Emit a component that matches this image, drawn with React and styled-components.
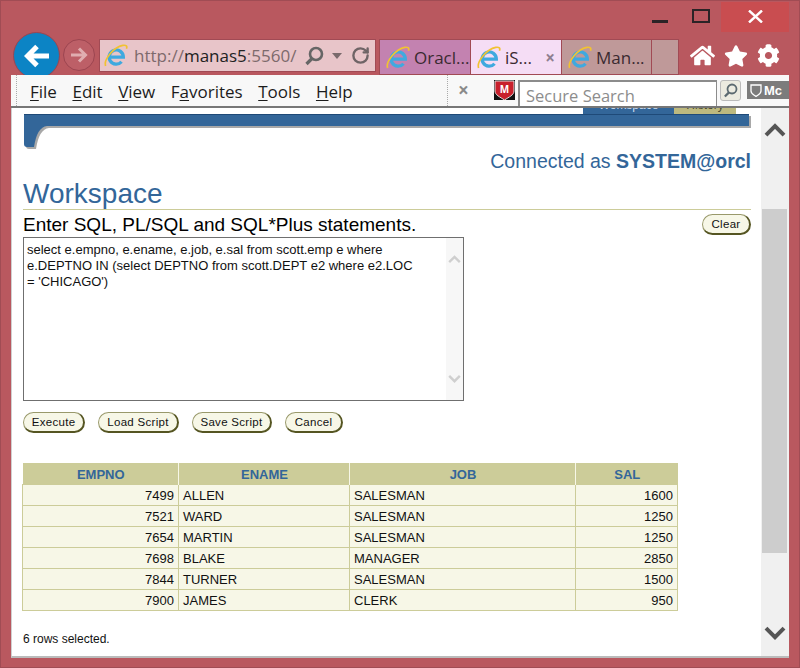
import styled, { createGlobalStyle } from "styled-components";
import { FaHome, FaStar, FaCog } from "react-icons/fa";
import { RotateCw } from "lucide-react";

const GlobalStyle = createGlobalStyle`
  html, body {
    margin: 0;
    padding: 0;
    background: #b9575f;
  }
`;

const Frame = styled.div`
  width: 800px;
  height: 668px;
  box-sizing: border-box;
  background: #b9585f;
  border: 1px solid #a04c54;
  overflow: hidden;
  display: flex;
  flex-direction: column;
  font-family: "Liberation Sans", Arial, sans-serif;
`;

const TitleBar = styled.div`
  height: 31px;
  display: flex;
  justify-content: flex-end;
  align-items: flex-start;
  padding-right: 10px;
`;

const WinButton = styled.div`
  width: ${(p) => p.$w}px;
  height: 30px;
  box-sizing: border-box;
  padding-bottom: 2px;
  display: flex;
  align-items: center;
  justify-content: center;
  background: ${(p) => (p.$close ? "#c94d50" : "transparent")};
  margin-top: 1px;
`;

const NavRow = styled.div`
  height: 43px;
  display: flex;
  align-items: flex-start;
  position: relative;
  padding-left: 98px;
`;

const BackButton = styled.div`
  position: absolute;
  left: 12px;
  top: 0;
  width: 45px;
  height: 45px;
  border-radius: 50%;
  background: #0c84c5;
  border: 1px solid #9c4550;
  display: flex;
  align-items: center;
  justify-content: center;
`;

const ForwardButton = styled.div`
  position: absolute;
  left: 62px;
  top: 7px;
  width: 30px;
  height: 30px;
  border-radius: 50%;
  background: #bd5f67;
  border: 1px solid #9c4550;
  display: flex;
  align-items: center;
  justify-content: center;
`;

const AddressBar = styled.div`
  width: 277px;
  height: 33px;
  margin-top: 7px;
  box-sizing: border-box;
  background: #e8c5c9;
  border: 1px solid #a14a54;
  display: flex;
  align-items: center;
  padding-left: 3px;
  font-family: "Open Sans", sans-serif;
  font-size: 17px;
  color: #7d6a6c;
  white-space: nowrap;
`;

const UrlText = styled.span`
  margin-left: 6px;
  width: 164px;
  overflow: hidden;
  flex: none;
  b {
    font-weight: 400;
    color: #222;
  }
`;

const Tabs = styled.div`
  display: flex;
  margin-top: 7px;
  margin-left: 3px;
`;

const Tab = styled.div`
  width: ${(p) => p.$w}px;
  height: 36px;
  box-sizing: border-box;
  background: ${(p) => p.$bg};
  border: 1px solid #a14a54;
  border-left-width: ${(p) => (p.$joined ? 0 : 1)}px;
  display: flex;
  align-items: center;
  gap: 4px;
  padding-left: 5px;
  font-family: "Open Sans", sans-serif;
  font-size: 17px;
  color: #3a2a30;
  white-space: nowrap;
  overflow: hidden;
`;

const TabClose = styled.span`
  margin-left: auto;
  margin-right: 6px;
  color: #8f7f90;
  font-size: 17px;
  font-weight: 700;
`;

const ToolIcons = styled.div`
  display: flex;
  align-items: center;
  gap: 9px;
  margin-left: 11px;
  margin-top: 11px;
  color: #fff;
`;

const MenuBar = styled.div`
  height: 33px;
  margin: 0 10px;
  box-sizing: border-box;
  background: #f8f8f8;
  border-bottom: 2px solid #777;
  display: flex;
  overflow: hidden;
  position: relative;
  z-index: 1;
  font-family: "Open Sans", sans-serif;
  font-size: 17px;
  color: #1c1c1c;
`;

const MenuList = styled.div`
  width: 432px;
  flex: none;
  margin-left: 5px;
  box-sizing: border-box;
  border-left: 1px dotted #aaa;
  border-right: 1px dotted #aaa;
  display: flex;
  gap: 15.5px;
  align-items: center;
  padding: 2px 0 0 13px;
`;

const MenuItem = styled.span`
  u {
    text-underline-offset: 2px;
  }
`;

const StopX = styled.span`
  margin-left: 10px;
  margin-top: 2px;
  width: 29px;
  flex: none;
  color: #8a8a8a;
  font-size: 19px;
  font-weight: 700;
`;

const Shield = styled.svg`
  margin: 5px 0 0 7px;
  flex: none;
`;

const SearchInput = styled.div`
  width: 199px;
  height: 40px;
  margin: 5px 0 0 3px;
  box-sizing: border-box;
  background: #fff;
  border: 2px solid #8c8c8c;
  border-right-width: 1px;
  padding: 2px 0 0 6px;
  color: #8d8d8d;
  font-size: 16.5px;
  flex: none;
`;

const SearchButton = styled.div`
  width: 21px;
  height: 21px;
  margin: 5px 0 0 3px;
  box-sizing: border-box;
  background: #ecebe0;
  border: 1px solid #bbb;
  border-radius: 3px;
  display: flex;
  align-items: center;
  justify-content: center;
  flex: none;
`;

const BrandButton = styled.div`
  width: 44px;
  height: 18px;
  margin: 6px 0 0 6px;
  background: #7c7c7c;
  color: #fff;
  font-size: 13px;
  font-weight: 700;
  display: flex;
  align-items: center;
  gap: 2px;
  padding-left: 3px;
  flex: none;
  overflow: hidden;
  white-space: nowrap;
  font-family: "Liberation Sans", Arial, sans-serif;
`;

const Page = styled.div`
  height: 548px;
  margin: 0 10px;
  background: #fff;
  border-left: 1px solid #d0d0d0;
  border-bottom: 2px solid #bbb;
  display: flex;
  overflow: hidden;
`;

const Main = styled.div`
  width: 749px;
  box-sizing: border-box;
  padding: 0 10px 0 11px;
`;

const TopTabs = styled.div`
  height: 6px;
  display: flex;
  justify-content: flex-end;
  padding-right: 15px;
  overflow: hidden;
`;

const TopTab = styled.div`
  width: ${(p) => p.$w}px;
  height: 6px;
  background: ${(p) => p.$bg};
  color: ${(p) => p.$color};
  font-size: 12px;
  line-height: 12px;
  text-align: center;
  overflow: hidden;
  span {
    display: block;
    margin-top: -9px;
  }
`;

const Banner = styled.svg`
  display: block;
  height: 36px;
  width: 728px;
`;

const Connected = styled.div`
  text-align: right;
  color: #336699;
  font-size: 19.5px;
  line-height: 22px;
  b {
    font-weight: 700;
  }
`;

const Heading = styled.h1`
  margin: 7px 0 0;
  font-size: 28px;
  line-height: 30px;
  font-weight: 400;
  color: #336699;
  border-bottom: 1px solid #cccc99;
`;

const SqlRow = styled.div`
  height: 27px;
  box-sizing: border-box;
  padding-top: 2px;
  display: flex;
  align-items: center;
  justify-content: space-between;
  font-size: 19px;
  color: #000;
`;

const PillButton = styled.div`
  display: inline-flex;
  align-items: center;
  justify-content: center;
  width: ${(p) => p.$w}px;
  height: 21px;
  box-sizing: border-box;
  background: #f7f7e7;
  border: 1px solid #99996b;
  border-right: 2px solid #555522;
  border-bottom: 2px solid #555522;
  border-radius: 11px;
  font-size: 11.5px;
  letter-spacing: 0.3px;
  color: #111;
`;

const SqlBox = styled.div`
  width: 441px;
  height: 164px;
  box-sizing: border-box;
  border: 1px solid #6f6f6f;
  display: flex;
  justify-content: space-between;
`;

const SqlText = styled.div`
  padding: 4px 0 0 3px;
  width: 388px;
  font-size: 13px;
  line-height: 16px;
  color: #111;
`;

const BoxScroll = styled.div`
  width: 17px;
  background: #f7f7f7;
  display: flex;
  flex-direction: column;
  justify-content: space-between;
  align-items: center;
  padding: 17px 0 17px;
`;

const ButtonRow = styled.div`
  display: flex;
  gap: 13px;
  margin-top: 11px;
`;

const ResultTable = styled.table`
  margin: 30px 0 0 -1px;
  width: 655px;
  border-collapse: collapse;
  table-layout: fixed;
  font-size: 13px;
`;

const Th = styled.th`
  height: 20px;
  padding: 1px 0 0 1px;
  background: #cccc99;
  color: #336699;
  font-weight: 700;
  text-align: center;
  border-left: 1px solid #f7f7e7;
  &:first-child {
    border-left: 0;
  }
`;

const Td = styled.td`
  height: 20px;
  padding: 0 4px;
  background: #f7f7e7;
  border: 1px solid #cccc99;
  color: #111;
  text-align: ${(p) => (p.$num ? "right" : "left")};
`;

const RowCount = styled.div`
  margin-top: 21px;
  font-size: 12px;
  line-height: 15px;
  color: #111;
`;

const ScrollBar = styled.div`
  width: 28px;
  background: #f0f0f0;
  display: flex;
  flex-direction: column;
  align-items: center;
`;

const ScrollEnd = styled.div`
  height: ${(p) => p.$h}px;
  display: flex;
  align-items: ${(p) => (p.$down ? "flex-end" : "flex-start")};
  padding: ${(p) => (p.$down ? "0 0 14px" : "15px 0 0")};
  box-sizing: border-box;
`;

const Thumb = styled.div`
  width: 25px;
  margin-right: 2px;
  height: 344px;
  background: #cdcdcd;
`;

const IeIcon = () => (
  <svg width="25" height="25" viewBox="0 0 24 24" fill="none" style={{ flex: "none" }}>
    <path
      d="M7 13.500H19.500A6.800 6.800 0 1 0 17.800 18"
      stroke="#3fa9df"
      strokeWidth="3.200"
    />
    <path
      d="M2.500 22C0.500 16 10 4 19 2.300C22.500 1.800 23.500 3 22.500 5.500"
      stroke="#f1c232"
      strokeWidth="1.600"
    />
  </svg>
);

const Chevron = ({ down, size = 22, color = "#555", width = 4 }) => (
  <svg width={size} height={size * 0.7} viewBox="0 0 22 15" fill="none">
    <path
      d={down ? "M2 3l9 9 9-9" : "M2 12l9-9 9 9"}
      stroke={color}
      strokeWidth={width}
    />
  </svg>
);

const Magnifier = ({ size = 20, color = "#666", width = 2.6 }) => (
  <svg width={size} height={size} viewBox="0 0 20 20" fill="none">
    <circle cx="12" cy="8" r="6" stroke={color} strokeWidth={width} />
    <path d="M8 12.500L2.500 18" stroke={color} strokeWidth={width + 0.6} />
  </svg>
);

const columns = ["EMPNO", "ENAME", "JOB", "SAL"];
const columnWidths = [156, 171, 226, 102];

const rows = [
  [7499, "ALLEN", "SALESMAN", 1600],
  [7521, "WARD", "SALESMAN", 1250],
  [7654, "MARTIN", "SALESMAN", 1250],
  [7698, "BLAKE", "MANAGER", 2850],
  [7844, "TURNER", "SALESMAN", 1500],
  [7900, "JAMES", "CLERK", 950],
];

const menus = [
  ["F", "ile"],
  ["E", "dit"],
  ["V", "iew"],
  ["F", "avorites", true],
  ["T", "ools"],
  ["H", "elp"],
];

export default function App() {
  return (
    <>
      <GlobalStyle />
      <Frame>
        <TitleBar>
          <WinButton $w={42}>
            <svg width="16" height="16" viewBox="0 0 16 16">
              <rect x="0" y="12" width="16" height="3" fill="#2b2326" />
            </svg>
          </WinButton>
          <WinButton $w={40}>
            <svg width="18" height="14" viewBox="0 0 18 14" fill="none">
              <rect x="1" y="1" width="16" height="12" stroke="#2b2326" strokeWidth="2" />
            </svg>
          </WinButton>
          <WinButton $w={68} $close>
            <svg width="15" height="13" viewBox="0 0 15 13" stroke="#fff" strokeWidth="2.400">
              <path d="M1 0.500L14 12.500M14 0.500L1 12.500" />
            </svg>
          </WinButton>
        </TitleBar>

        <NavRow>
          <BackButton>
            <svg width="26" height="26" viewBox="0 0 26 26" fill="none" stroke="#fff" strokeWidth="5">
              <path d="M25 13H5M13 3.500L3.500 13l9.500 9.500" />
            </svg>
          </BackButton>
          <ForwardButton>
            <svg width="18" height="18" viewBox="0 0 18 18" fill="none" stroke="#e0adb0" strokeWidth="3">
              <path d="M1 9h14M9 2.500L15.500 9 9 15.500" />
            </svg>
          </ForwardButton>
          <AddressBar>
            <IeIcon />
            <UrlText>
              http://<b>manas5</b>:5560/
            </UrlText>
            <span style={{ display: "flex", marginLeft: 6 }}>
              <Magnifier />
            </span>
            <svg width="10" height="6" viewBox="0 0 10 6" style={{ marginLeft: 8 }}>
              <path d="M0 0h10L5 6z" fill="#7a6a6c" />
            </svg>
            <RotateCw size={19} strokeWidth={3} color="#6f6466" style={{ marginLeft: 9 }} />
          </AddressBar>
          <Tabs>
            <Tab $w={92} $bg="#c382b0">
              <IeIcon />
              Oracl...
            </Tab>
            <Tab $w={91} $bg="#f5ddf5" $joined>
              <IeIcon />
              iS...
              <TabClose>×</TabClose>
            </Tab>
            <Tab $w={90} $bg="#bf9999" $joined>
              <IeIcon />
              Man...
            </Tab>
            <Tab $w={27} $bg="#bf9999" $joined />
          </Tabs>
          <ToolIcons>
            <FaHome size={25} />
            <FaStar size={24} />
            <FaCog size={23} />
          </ToolIcons>
        </NavRow>

        <MenuBar>
          <MenuList>
            {menus.map(([letter, rest, second]) => (
              <MenuItem key={letter + rest}>
                {second ? (
                  <>
                    {letter}
                    <u>{rest[0]}</u>
                    {rest.slice(1)}
                  </>
                ) : (
                  <>
                    <u>{letter}</u>
                    {rest}
                  </>
                )}
              </MenuItem>
            ))}
          </MenuList>
          <StopX>×</StopX>
          <Shield width="21" height="20" viewBox="0 0 21 20">
            <rect width="21" height="20" fill="#111" />
            <path d="M1 1h19v10c0 4-5 6-9.500 9C6 17 1 15 1 11z" fill="#c8202c" stroke="#ddd" />
            <text x="10.500" y="13" fontSize="10" fontWeight="700" fill="#fff" textAnchor="middle">
              M
            </text>
          </Shield>
          <SearchInput>Secure Search</SearchInput>
          <SearchButton>
            <Magnifier size={15} color="#5c6a70" width={2.4} />
          </SearchButton>
          <BrandButton>
            <svg width="12" height="13" viewBox="0 0 12 13">
              <path d="M1 1h10v6c0 3-3 4-5 5.500C4 11 1 10 1 7z" fill="none" stroke="#fff" strokeWidth="1.300" />
            </svg>
            Mc
          </BrandButton>
        </MenuBar>

        <Page>
          <Main>
            <TopTabs>
              <TopTab $w={91} $bg="#336699" $color="#cfdcec">
                <span>Workspace</span>
              </TopTab>
              <TopTab $w={62} $bg="#bdb97f" $color="#4c4a2c">
                <span>History</span>
              </TopTab>
            </TopTabs>
            <Banner viewBox="0 0 728 36">
              <path d="M3 2H728V14H26Q16 15 13 35H6Q3 35 3 32z" fill="#a8a8a8" />
              <path d="M1 0H726V12H24Q14 13 11 33H4Q1 33 1 30z" fill="#336699" />
              <path d="M1 0.500H726" stroke="#1f4a78" />
            </Banner>
            <Connected>
              Connected as <b>SYSTEM@orcl</b>
            </Connected>
            <Heading>Workspace</Heading>
            <SqlRow>
              Enter SQL, PL/SQL and SQL*Plus statements.
              <PillButton $w={49}>Clear</PillButton>
            </SqlRow>
            <SqlBox>
              <SqlText>
                select e.empno, e.ename, e.job, e.sal from scott.emp e where
                e.DEPTNO IN (select DEPTNO from scott.DEPT e2 where e2.LOC =
                'CHICAGO')
              </SqlText>
              <BoxScroll>
                <Chevron size={13} color="#cfcfcf" width={4} />
                <Chevron down size={13} color="#cfcfcf" width={4} />
              </BoxScroll>
            </SqlBox>
            <ButtonRow>
              <PillButton $w={62}>Execute</PillButton>
              <PillButton $w={81}>Load Script</PillButton>
              <PillButton $w={80}>Save Script</PillButton>
              <PillButton $w={58}>Cancel</PillButton>
            </ButtonRow>
            <ResultTable>
              <colgroup>
                {columnWidths.map((w, i) => (
                  <col key={i} width={w} />
                ))}
              </colgroup>
              <thead>
                <tr>
                  {columns.map((c) => (
                    <Th key={c}>{c}</Th>
                  ))}
                </tr>
              </thead>
              <tbody>
                {rows.map((r) => (
                  <tr key={r[0]}>
                    <Td $num>{r[0]}</Td>
                    <Td>{r[1]}</Td>
                    <Td>{r[2]}</Td>
                    <Td $num>{r[3]}</Td>
                  </tr>
                ))}
              </tbody>
            </ResultTable>
            <RowCount>6 rows selected.</RowCount>
          </Main>
          <ScrollBar>
            <ScrollEnd $h={101}>
              <Chevron />
            </ScrollEnd>
            <Thumb />
            <ScrollEnd $h={101} $down>
              <Chevron down />
            </ScrollEnd>
          </ScrollBar>
        </Page>
      </Frame>
    </>
  );
}
